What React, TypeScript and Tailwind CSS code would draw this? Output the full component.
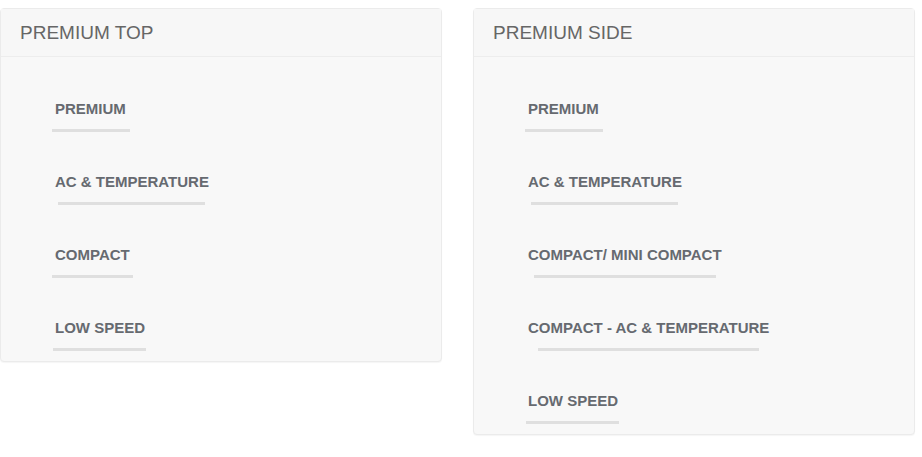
import React from "react";

type Item = { label: string; ml: number; w: number };

const left: Item[] = [
  { label: "PREMIUM", ml: 2, w: 78 },
  { label: "AC & TEMPERATURE", ml: 8, w: 147 },
  { label: "COMPACT", ml: 2, w: 81 },
  { label: "LOW SPEED", ml: 3, w: 93 },
];

const right: Item[] = [
  { label: "PREMIUM", ml: 2, w: 78 },
  { label: "AC & TEMPERATURE", ml: 8, w: 147 },
  { label: "COMPACT/ MINI COMPACT", ml: 11, w: 182 },
  { label: "COMPACT - AC & TEMPERATURE", ml: 15, w: 221 },
  { label: "LOW SPEED", ml: 3, w: 93 },
];

function Card({ title, items }: { title: string; items: Item[] }) {
  return (
    <div className="w-[442px] self-start rounded-[4px] border border-[#ebebeb] bg-[#f8f8f8] shadow-[0_1px_1px_rgba(0,0,0,0.04)]">
      <div className="h-[48px] border-b border-[#ededed] bg-[#f7f7f7] pl-[19px] text-[19px] leading-[47px] text-[#666]">
        {title}
      </div>
      <div className="flex flex-col gap-[40px] pl-[49px] pt-[42px] pb-[10px]">
        {items.map((it) => (
          <div key={it.label} className="flex flex-col items-start">
            <div className="ml-[5px] text-[15px] font-bold leading-[20px] text-[#666a70]">
              {it.label}
            </div>
            <div
              className="mt-[10px] h-[3px] bg-[#dfdfdf]"
              style={{ marginLeft: it.ml, width: it.w }}
            />
          </div>
        ))}
      </div>
    </div>
  );
}

export default function App() {
  return (
    <div
      className="flex h-[457px] w-[922px] items-start gap-[31px] bg-white pt-[8px]"
      style={{ fontFamily: '"Liberation Sans", Arial, sans-serif' }}
    >
      <Card title="PREMIUM TOP" items={left} />
      <Card title="PREMIUM SIDE" items={right} />
    </div>
  );
}
